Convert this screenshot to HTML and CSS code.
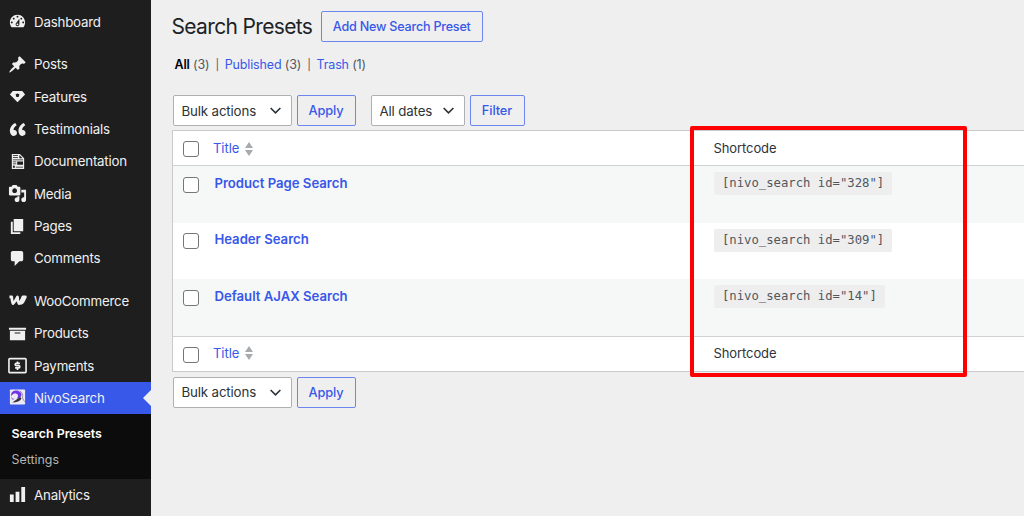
FILE: index.html
```html
<!DOCTYPE html>
<html lang="en">
<head>
    <meta charset="UTF-8">
    <meta name="viewport" content="width=device-width, initial-scale=1.0">
    <title>Search Presets</title>
    <link rel="stylesheet" href="styles.css">
</head>
<body>
    <nav class="sidebar">
        <a class="menu-item"><svg viewBox="0 0 20 20"><path d="M3.76 16h12.48c1.1-1.37 1.76-3.11 1.76-5 0-4.42-3.58-8-8-8s-8 3.58-8 8c0 1.89.66 3.63 1.76 5zM10 4c.55 0 1 .45 1 1s-.45 1-1 1-1-.45-1-1 .45-1 1-1zM6 6c.55 0 1 .45 1 1s-.45 1-1 1-1-.45-1-1 .45-1 1-1zm8 0c.55 0 1 .45 1 1s-.45 1-1 1-1-.45-1-1 .45-1 1-1zm-5.37 5.55L12 7v6c0 1.1-.9 2-2 2s-2-.9-2-2c0-.57.24-1.08.63-1.45zM4 10c.55 0 1 .45 1 1s-.45 1-1 1-1-.45-1-1 .45-1 1-1zm12 0c.55 0 1 .45 1 1s-.45 1-1 1-1-.45-1-1 .45-1 1-1zm-5 3c0-.55-.45-1-1-1s-1 .45-1 1 .45 1 1 1 1-.45 1-1z" fill-rule="evenodd"/></svg><span>Dashboard</span></a>
        <div class="separator"></div>
        <a class="menu-item"><svg viewBox="0 0 20 20"><path d="M10.44 3.02l1.82-1.82 6.36 6.35-1.83 1.82c-1.05-.68-2.48-.57-3.41.36l-.75.75c-.92.93-1.04 2.35-.35 3.41l-1.83 1.82-2.41-2.41-2.8 2.79c-.42.42-3.38 2.71-3.8 2.29s1.86-3.39 2.28-3.81l2.79-2.79L4.1 9.36l1.83-1.82c1.05.69 2.48.57 3.4-.36l.75-.75c.93-.92 1.05-2.35.36-3.41z"/></svg><span>Posts</span></a>
        <a class="menu-item"><svg viewBox="0 0 20 20"><path fill-rule="evenodd" d="M5 4.2h10l3 3.8-8 8-8-8zM8 7.6l.8 3h2.4l.8-3-2-.8z"/></svg><span>Features</span></a>
        <a class="menu-item"><svg class="quote" viewBox="0 0 20 20"><path d="M9.49 13.22c0-.74-.2-1.38-.61-1.9-.62-.78-1.83-.88-2.53-.72-.29-1.65 1.11-3.75 2.92-4.65L7.88 4c-2.73 1.3-5.42 4.28-4.96 8.05C3.21 14.43 4.59 16 6.54 16c.85 0 1.56-.25 2.12-.75s.83-1.18.83-2.03zm8.05 0c0-.74-.2-1.38-.61-1.9-.63-.78-1.83-.88-2.53-.72-.29-1.65 1.11-3.75 2.92-4.65L15.93 4c-2.73 1.3-5.41 4.28-4.95 8.05.29 2.38 1.66 3.95 3.61 3.95.85 0 1.56-.25 2.12-.75s.83-1.18.83-2.03z"/></svg><span>Testimonials</span></a>
        <a class="menu-item"><svg viewBox="0 0 20 20"><path fill-rule="evenodd" d="M4 2h8.5L17 6.5V18H4zM5.2 3.2v.8h5.3v-.8zM5.2 5.4v.8h5.3v-.8zM12 3.2V6.6h3.3zM5.2 7.8v.8h10.6v-.8zM5.2 10v.8h3.5V10zM9.7 10v3.3h6.1V10zM5.2 12.2v.8h3.5v-.8zM5.2 14.6v2h2v-2zM8.2 15.4v.9h7.6v-.9z"/></svg><span>Documentation</span></a>
        <a class="menu-item"><svg viewBox="0 0 20 20"><path d="M13 11V4c0-.55-.45-1-1-1h-1.67L9 1H5L3.67 3H2c-.55 0-1 .45-1 1v7c0 .55.45 1 1 1h10c.55 0 1-.45 1-1zM7 4.5c1.38 0 2.5 1.12 2.5 2.5S8.38 9.5 7 9.5 4.5 8.38 4.5 7 5.62 4.5 7 4.5zM14 6h5v10.5c0 1.38-1.12 2.5-2.5 2.5S14 17.88 14 16.5s1.12-2.5 2.5-2.5c.17 0 .34.02.5.05V9h-3V6zm-4 8.05V13h2v3.5c0 1.38-1.12 2.5-2.5 2.5S7 17.88 7 16.5 8.12 14 9.5 14c.17 0 .34.02.5.05z"/></svg><span>Media</span></a>
        <a class="menu-item"><svg viewBox="0 0 20 20"><path d="M6 15V2h10v13H6zm-1 1h8v2H3V5h2v11z"/></svg><span>Pages</span></a>
        <a class="menu-item"><svg viewBox="0 0 20 20"><path d="M5 2h9c1.1 0 2 .9 2 2v7c0 1.1-.9 2-2 2h-2l-5 5v-5H5c-1.1 0-2-.9-2-2V4c0-1.1.9-2 2-2z"/></svg><span>Comments</span></a>
        <div class="separator"></div>
        <a class="menu-item"><svg class="woo" viewBox="0 0 20 20"><path d="M1.5 6.300H3.900Q4.400 12.500 5.300 13.200 6.900 12.300 10 6.300 10.500 12.500 11.600 13.200 13.200 12.300 15.600 6.300H18.300L16.300 10.500Q14.900 13.200 13 13.200"/></svg><span>WooCommerce</span></a>
        <a class="menu-item"><svg viewBox="0 0 20 20"><path d="M19 4v2H1V4h18zM2 7h16v10H2V7zm11 3V9H7v1h6z"/></svg><span>Products</span></a>
        <a class="menu-item"><svg viewBox="0 0 20 20"><rect x="1" y="2.8" width="18" height="14.7" rx="1" fill="none" stroke="#f0f0f1" stroke-width="1.7"/><path d="M12.5 7.8H8.8Q7.6 7.8 7.6 9t1.2 1.2h2.4q1.2 0 1.2 1.2t-1.2 1.2H7.5M10 5.7v2M10 12.6v2.2" fill="none" stroke="#f0f0f1" stroke-width="1.8"/></svg><span>Payments</span></a>
        <a class="menu-item current"><svg class="nivo" viewBox="0 0 20 20"><rect x="2" y="2" width="16" height="16" rx=".8" fill="#ede9f5"/><path d="M3.5 9C2.5 4.500 7 2.200 11 3.700S14.800 9 12.500 10.600L9.200 12Q12 8 9 6.500T3.500 9z" fill="#6f35e8"/><path d="M3.500 9q0 3 3.500 2.800L5 13.200Q2.500 11.500 3.500 9z" fill="#9270df"/><path d="M4.500 15.800 12.700 10l1.500 1.500q-2 4-9.700 4.300z" fill="#37333e"/><path d="M12.300 3.500q4 2.300 2.900 7.500l2.300 4" fill="none" stroke="#9b8bb9" stroke-width="1"/></svg><span>NivoSearch</span></a>
        <div class="submenu">
            <a class="active">Search Presets</a>
            <a>Settings</a>
        </div>
        <a class="menu-item"><svg viewBox="0 0 20 20"><path d="M18 18V2h-4v16h4zm-6 0V7H8v11h4zm-6 0v-8H2v8h4z"/></svg><span>Analytics</span></a>
    </nav>

    <main class="content">
        <header class="page-head">
            <h1>Search Presets</h1>
            <button class="button add-new">Add New Search Preset</button>
        </header>

        <div class="filters">
            <span><b>All</b> (3)</span><i>|</i><span><a>Published</a> (3)</span><i>|</i><span><a>Trash</a> (1)</span>
        </div>

        <div class="tablenav">
            <div class="select bulk"><span>Bulk actions</span><svg viewBox="0 0 12 12"><path d="M1.5 3.7 6 8.2l4.5-4.5"/></svg></div>
            <button class="button apply">Apply</button>
            <div class="select dates"><span>All dates</span><svg viewBox="0 0 12 12"><path d="M1.5 3.7 6 8.2l4.5-4.5"/></svg></div>
            <button class="button filter">Filter</button>
        </div>

        <div class="table">
            <div class="row head">
                <div class="check"></div>
                <div class="title"><a>Title</a><svg class="sort" viewBox="0 0 8 14"><path d="M0 6 4 0l4 6zM0 8h8l-4 6z"/></svg></div>
                <div class="shortcode">Shortcode</div>
            </div>
            <div class="row odd">
                <div class="check"></div>
                <div class="title"><a>Product Page Search</a></div>
                <div class="shortcode"><code>[nivo_search id="328"]</code></div>
            </div>
            <div class="row">
                <div class="check"></div>
                <div class="title"><a>Header Search</a></div>
                <div class="shortcode"><code>[nivo_search id="309"]</code></div>
            </div>
            <div class="row odd">
                <div class="check"></div>
                <div class="title"><a>Default AJAX Search</a></div>
                <div class="shortcode"><code>[nivo_search id="14"]</code></div>
            </div>
            <div class="row head foot">
                <div class="check"></div>
                <div class="title"><a>Title</a><svg class="sort" viewBox="0 0 8 14"><path d="M0 6 4 0l4 6zM0 8h8l-4 6z"/></svg></div>
                <div class="shortcode">Shortcode</div>
            </div>
            <div class="highlight"></div>
        </div>

        <div class="tablenav bottom">
            <div class="select bulk"><span>Bulk actions</span><svg viewBox="0 0 12 12"><path d="M1.5 3.7 6 8.2l4.5-4.5"/></svg></div>
            <button class="button apply">Apply</button>
        </div>
    </main>
</body>
</html>
```
FILE: styles.css
```css
* {
    box-sizing: border-box;
}

body {
    margin: 0;
    height: 516px;
    display: flex;
    overflow: hidden;
    background: #efeff0;
    color: #2c3338;
    font-family: Inter, sans-serif;
    font-size: 13px;
}

/* Sidebar */
.sidebar {
    width: 151px;
    flex: none;
    padding-top: 5.7px;
    background: #1e1e1e;
    color: #f0f0f1;
}

.menu-item {
    height: 32.35px;
    padding-left: 7.5px;
    display: flex;
    align-items: center;
    font-size: 13.3px;
    letter-spacing: -.2px;
    white-space: nowrap;
    position: relative;
}

.menu-item svg {
    width: 19px;
    height: 19px;
    margin-right: 7.5px;
    flex: none;
    fill: #f0f0f1;
    overflow: visible;
}

.menu-item .quote {
    transform: scale(1.12);
}

.menu-item .woo {
    fill: none;
    stroke: #f0f0f1;
    stroke-width: 2.9;
    stroke-linejoin: round;
}

.menu-item .nivo {
    transform: translateY(-1.5px);
}

.separator {
    height: 10.2px;
}

.current {
    background: #3858e9;
}

.current::after {
    content: "";
    position: absolute;
    right: 0;
    top: 8px;
    border: 8px solid transparent;
    border-left: 0;
    border-right-color: #efeff0;
}

.submenu {
    height: 64.4px;
    padding: 6.5px 0 0 11.5px;
    background: #0c0c0c;
}

.submenu a {
    display: block;
    line-height: 26.8px;
    font-size: 12.4px;
    color: #b4b5b6;
}

.submenu .active {
    color: #fff;
    font-weight: 600;
}

/* Page heading */
.content {
    flex: 1;
    padding: 11px 0 0 21.5px;
}

.page-head {
    display: flex;
    align-items: center;
    height: 31px;
}

h1 {
    width: 148px;
    margin: 0 0 0 -1px;
    padding-right: 1px;
    flex: none;
    font-size: 21px;
    letter-spacing: -.65px;
    font-weight: 400;
    color: #1d2327;
    white-space: nowrap;
}

.button {
    height: 31px;
    padding: 0;
    border: 1px solid #6d85ee;
    border-radius: 2px;
    background: transparent;
    color: #3858e9;
    font-family: inherit;
    font-size: 12.8px;
    letter-spacing: -.1px;
    font-weight: 500;
    white-space: nowrap;
}

.add-new {
    width: 162.5px;
    margin-left: 1px;
    font-size: 12.6px;
    letter-spacing: -.22px;
}

.filters {
    margin: 12.5px 0 0 2px;
    height: 20px;
    display: flex;
    align-items: center;
    font-size: 12.5px;
    letter-spacing: -.15px;
    color: #50575e;
    white-space: nowrap;
}

.filters b {
    color: #000;
    font-weight: 600;
}

.filters i {
    font-style: normal;
    font-size: 11px;
    margin: 0 5.8px 0 6px;
}

.content a {
    color: #3858e9;
}

/* Bulk actions and filters */
.tablenav {
    margin: 20.5px 0 4px;
    display: flex;
}

.select {
    height: 31px;
    padding: 0 9px 0 8px;
    display: flex;
    align-items: center;
    justify-content: space-between;
    border: 1px solid #aeb0b3;
    border-radius: 2px;
    background: #fff;
    font-size: 13.3px;
    letter-spacing: -.15px;
}

.select svg {
    width: 13px;
    height: 13px;
    fill: none;
    stroke: #2c3338;
    stroke-width: 1.5;
}

.bulk {
    width: 119px;
    margin-right: 5px;
}

.apply {
    width: 59px;
    margin-right: 15px;
}

.dates {
    width: 94px;
    margin-right: 5px;
}

.filter {
    width: 55px;
}

/* Presets table */
.table {
    position: relative;
    margin-left: -.6px;
    border: 1px solid #c9cacd;
    border-right: 0;
    background: #fff;
}

.row {
    display: grid;
    grid-template-columns: 41px 499.5px 1fr;
    height: 56.5px;
    padding-top: 10.5px;
}

.odd {
    background: #f6f7f7;
}

.head {
    height: 35px;
    padding-top: 10px;
    border-bottom: 1px solid #d0d1d3;
}

.foot {
    border-bottom: 0;
    border-top: 1px solid #d0d1d3;
}

.check {
    width: 16px;
    height: 16px;
    margin-left: 10px;
    border: 1px solid #74777a;
    border-radius: 3px;
    background: #fff;
}

.title,
.shortcode {
    line-height: 15px;
}

.title {
    font-weight: 600;
}

.row:not(.head) .title {
    font-size: 13.15px;
    line-height: 14px;
    margin-top: -1px;
    padding-left: .5px;
}

.head .title {
    display: flex;
    align-items: center;
    align-self: start;
    font-weight: 400;
    margin-left: -1px;
}

.head .shortcode {
    letter-spacing: -.08px;
}

.foot .title,
.foot .shortcode {
    margin-top: -1px;
}

.sort {
    width: 8px;
    height: 14px;
    margin-left: 5.5px;
    fill: #a7aaad;
}

code {
    display: inline-block;
    height: 23px;
    margin: -5px 0 0 .5px;
    padding: 0 8px;
    line-height: 23px;
    background: #eeeeef;
    border-radius: 2px;
    color: #50575e;
    font-family: "DejaVu Sans Mono", monospace;
    font-size: 12.25px;
}

.row:not(.head) .shortcode {
    margin-top: -1.5px;
}

/* Red frame around the shortcode column */
.highlight {
    position: absolute;
    left: 517.5px;
    top: -5px;
    width: 277px;
    height: 251px;
    border: 4px solid #fe0000;
    border-radius: 2px;
}

.bottom {
    margin-top: 5.3px;
}
```
